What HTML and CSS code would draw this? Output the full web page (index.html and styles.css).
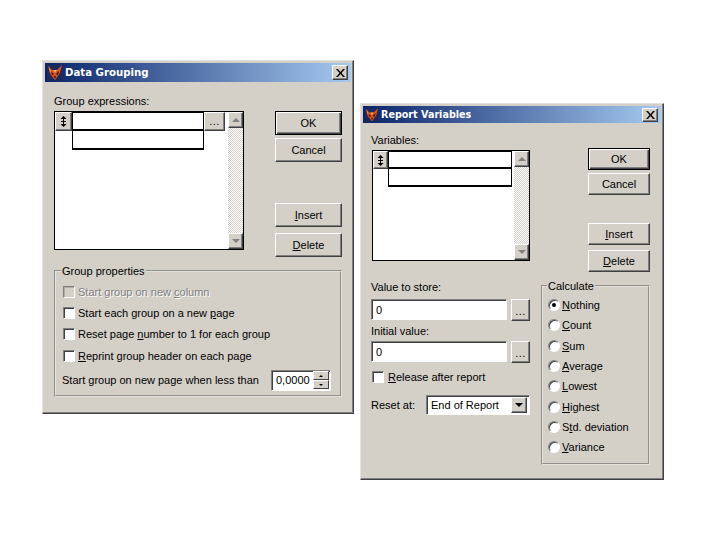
FILE: index.html
```html
<!DOCTYPE html>
<html lang="en">
<head>
    <meta charset="UTF-8">
    <title>Data Grouping and Report Variables</title>
    <link rel="stylesheet" href="styles.css">
</head>
<body>
    <!-- Data Grouping window -->
    <div class="dialog dialog-grouping">
        <div class="title-bar">
            <svg class="app-icon" viewBox="0 0 16 16">
                <rect width="16" height="16" fill="#1b2a5c"/>
                <path d="M1 1L5 5H10L15 0L13 8L8 15L3 9Z" fill="#d8501c"/>
                <path d="M4 7L7 9L5 10ZM12 6L9 9L11 10ZM7 11H9L8 14Z" fill="#300c08"/>
                <path d="M6 5H10L8 8ZM2 2L4 6L3 7Z" fill="#f0b040"/>
            </svg>
            <span class="title-text">Data Grouping</span>
            <span class="close-button"><svg viewBox="0 0 9 8"><path d="M0 0H2L4.500 3L7 0H9L5.500 4L9 8H7L4.500 5L2 8H0L3.500 4Z"/></svg></span>
        </div>
        <div class="dialog-body">
            <div class="top-row">
                <div class="list-column">
                    <div class="label">Group expressions:</div>
                    <div class="list-box">
                        <div class="list-rows">
                            <div class="list-row">
                                <span class="button header-button"><svg viewBox="0 0 7 11"><path d="M3.500 0L6.500 3H4V8H6.500L3.500 11L0.500 8H3V3H0.500ZM1 5H6V6H1Z"/></svg></span>
                                <span class="cell cell-active"></span>
                                <span class="button dots-button">...</span>
                            </div>
                            <div class="list-row">
                                <span class="header-space"></span>
                                <span class="cell"></span>
                            </div>
                        </div>
                        <div class="scrollbar">
                            <span class="button scroll-button"><i class="arrow-up"></i></span>
                            <span class="scroll-track"></span>
                            <span class="button scroll-button"><i class="arrow-down"></i></span>
                        </div>
                    </div>
                </div>
                <div class="button-column">
                    <div class="button default-button">OK</div>
                    <div class="button">Cancel</div>
                    <div class="button insert-button"><u>I</u>nsert</div>
                    <div class="button delete-button"><u>D</u>elete</div>
                </div>
            </div>
            <fieldset class="group-box properties-box">
                <legend>Group properties</legend>
                <div class="check-row disabled"><span class="check"></span><span>Start group on new <u>c</u>olumn</span></div>
                <div class="check-row"><span class="check"></span><span>Start each group on a new <u>p</u>age</span></div>
                <div class="check-row"><span class="check"></span><span>Reset page <u>n</u>umber to 1 for each group</span></div>
                <div class="check-row"><span class="check"></span><span><u>R</u>eprint group header on each page</span></div>
                <div class="spin-row">
                    <span>Start group on new page when less than</span>
                    <div class="spin-field">
                        <span>0,0000</span>
                        <div class="spin-buttons">
                            <span class="button spin-button"><i class="arrow-up tiny"></i></span>
                            <span class="button spin-button"><i class="arrow-down tiny"></i></span>
                        </div>
                    </div>
                </div>
            </fieldset>
        </div>
    </div>

    <!-- Report Variables window -->
    <div class="dialog dialog-variables">
        <div class="title-bar">
            <svg class="app-icon" viewBox="0 0 16 16">
                <rect width="16" height="16" fill="#1b2a5c"/>
                <path d="M1 1L5 5H10L15 0L13 8L8 15L3 9Z" fill="#d8501c"/>
                <path d="M4 7L7 9L5 10ZM12 6L9 9L11 10ZM7 11H9L8 14Z" fill="#300c08"/>
                <path d="M6 5H10L8 8ZM2 2L4 6L3 7Z" fill="#f0b040"/>
            </svg>
            <span class="title-text">Report Variables</span>
            <span class="close-button"><svg viewBox="0 0 9 8"><path d="M0 0H2L4.500 3L7 0H9L5.500 4L9 8H7L4.500 5L2 8H0L3.500 4Z"/></svg></span>
        </div>
        <div class="dialog-body">
            <div class="top-row">
                <div class="list-column">
                    <div class="label">Variables:</div>
                    <div class="list-box">
                        <div class="list-rows">
                            <div class="list-row">
                                <span class="button header-button"><svg viewBox="0 0 7 11"><path d="M3.500 0L6.500 3H4V8H6.500L3.500 11L0.500 8H3V3H0.500ZM1 5H6V6H1Z"/></svg></span>
                                <span class="cell cell-active"></span>
                            </div>
                            <div class="list-row">
                                <span class="header-space"></span>
                                <span class="cell"></span>
                            </div>
                        </div>
                        <div class="scrollbar">
                            <span class="button scroll-button"><i class="arrow-up"></i></span>
                            <span class="scroll-track"></span>
                            <span class="button scroll-button"><i class="arrow-down"></i></span>
                        </div>
                    </div>
                </div>
                <div class="button-column">
                    <div class="button default-button">OK</div>
                    <div class="button">Cancel</div>
                    <div class="button insert-button"><u>I</u>nsert</div>
                    <div class="button delete-button"><u>D</u>elete</div>
                </div>
            </div>
            <div class="lower-row">
                <div class="value-column">
                    <div class="label">Value to store:</div>
                    <div class="edit-row">
                        <span class="edit">0</span>
                        <span class="button dots-button">...</span>
                    </div>
                    <div class="label initial-label">Initial value:</div>
                    <div class="edit-row">
                        <span class="edit">0</span>
                        <span class="button dots-button">...</span>
                    </div>
                    <div class="check-row release-row"><span class="check"></span><span><u>R</u>elease after report</span></div>
                    <div class="reset-row">
                        <span>Reset at:</span>
                        <div class="combo">
                            <span>End of Report</span>
                            <span class="button combo-button"><i class="arrow-down dark"></i></span>
                        </div>
                    </div>
                </div>
                <fieldset class="group-box calculate-box">
                    <legend>Calculate</legend>
                    <div class="radio-row"><span class="radio selected"></span><span><u>N</u>othing</span></div>
                    <div class="radio-row"><span class="radio"></span><span><u>C</u>ount</span></div>
                    <div class="radio-row"><span class="radio"></span><span><u>S</u>um</span></div>
                    <div class="radio-row"><span class="radio"></span><span><u>A</u>verage</span></div>
                    <div class="radio-row"><span class="radio"></span><span><u>L</u>owest</span></div>
                    <div class="radio-row"><span class="radio"></span><span><u>H</u>ighest</span></div>
                    <div class="radio-row"><span class="radio"></span><span>S<u>t</u>d. deviation</span></div>
                    <div class="radio-row"><span class="radio"></span><span><u>V</u>ariance</span></div>
                </fieldset>
            </div>
        </div>
    </div>
</body>
</html>
```

FILE: styles.css
```css
body {
    margin: 0;
    background-color: #fff;
    color: #000;
    font-family: "Liberation Sans", Arial, sans-serif;
    font-size: 11px;
    line-height: 14px;
}

/* windows sit on a free canvas */
.dialog {
    position: absolute;
    box-sizing: border-box;
    padding: 2px;
    background-color: #d4d0c8;
    border: 1px solid;
    border-color: #e4e2dc #404040 #404040 #e4e2dc;
    box-shadow: inset -1px -1px 0 #808080;
}

.dialog-grouping {
    left: 42px;
    top: 60px;
    width: 312px;
    height: 354px;
}

.dialog-variables {
    left: 360px;
    top: 103px;
    width: 304px;
    height: 377px;
}

.title-bar {
    display: flex;
    align-items: center;
    height: 19px;
    padding: 0 3px 0 2px;
    background: linear-gradient(to right, #0a246a, #a6caf0);
}

.dialog-variables .title-bar {
    height: 17px;
}

.app-icon {
    width: 16px;
    height: 16px;
    flex: none;
}

.dialog-variables .app-icon {
    width: 14px;
    height: 14px;
}

.title-text {
    margin-left: 2px;
    flex: 1;
    color: #fff;
    font-family: "DejaVu Sans", sans-serif;
    font-weight: bold;
    font-size: 10.2px;
    white-space: nowrap;
}

.dialog-variables .title-text {
    font-size: 9.6px;
}

.close-button {
    box-sizing: border-box;
    display: flex;
    align-items: center;
    justify-content: center;
    width: 16px;
    height: 15px;
    background-color: #d4d0c8;
    border: 1px solid;
    border-color: #fff #404040 #404040 #fff;
    box-shadow: inset -1px -1px 0 #808080;
}

.close-button svg {
    width: 9px;
    height: 8px;
}

.dialog-variables .close-button {
    height: 14px;
}

.dialog-grouping .dialog-body {
    padding: 12px 0 0 9px;
}

.dialog-variables .dialog-body {
    padding: 10px 0 0 8px;
}

.top-row {
    display: flex;
}

.label {
    height: 14px;
    white-space: nowrap;
}

.button {
    box-sizing: border-box;
    display: flex;
    align-items: center;
    justify-content: center;
    flex: none;
    background-color: #d4d0c8;
    border: 1px solid;
    border-color: #fff #404040 #404040 #fff;
    box-shadow: inset -1px -1px 0 #808080;
}

.default-button {
    border-color: #000;
    box-shadow: inset 1px 1px 0 #fff, inset -1px -1px 0 #404040, inset -2px -2px 0 #808080;
}

.button-column {
    display: flex;
    flex-direction: column;
}

.dialog-grouping .button-column {
    width: 67px;
    margin: 17px 0 0 31px;
    gap: 3px;
}

.dialog-grouping .button-column .button {
    height: 24px;
}

.dialog-grouping .insert-button {
    margin-top: 38px;
}

.dialog-grouping .delete-button {
    margin-top: 3px;
}

.dialog-variables .button-column {
    width: 62px;
    margin: 15px 0 0 58px;
    gap: 3px;
}

.dialog-variables .button-column .button {
    height: 22px;
}

.dialog-variables .insert-button {
    margin-top: 25px;
}

.dialog-variables .delete-button {
    margin-top: 2px;
}

.list-box {
    box-sizing: border-box;
    display: flex;
    justify-content: space-between;
    margin-top: 3px;
    background-color: #fff;
    border: 1px solid #000;
}

.dialog-grouping .list-box {
    width: 190px;
    height: 139px;
}

.dialog-variables .list-box {
    width: 158px;
    height: 111px;
    margin-left: 1px;
}

.list-row {
    display: flex;
}

.header-button svg {
    width: 7px;
    height: 11px;
}

.dialog-grouping .header-button,
.dialog-grouping .header-space {
    width: 17px;
    height: 19px;
}

.dialog-variables .header-button,
.dialog-variables .header-space {
    width: 15px;
    height: 18px;
}

.cell {
    box-sizing: border-box;
    display: block;
    border: 1px solid #000;
    border-top: none;
    border-width: 0 1px 2px 1px;
}

.cell-active {
    border-top: 1px solid #000;
    border-width: 1px 1px 2px 1px;
}

.dialog-grouping .cell {
    width: 132px;
    height: 19px;
}

.dialog-variables .cell {
    width: 124px;
    height: 18px;
}

.dots-button {
    width: 21px;
    padding-bottom: 2px;
    align-items: flex-end;
    letter-spacing: 0.5px;
}

.dialog-grouping .list-row .dots-button {
    height: 19px;
}

.scrollbar {
    display: flex;
    flex-direction: column;
    width: 15px;
}

.scroll-button {
    height: 16px;
}

.scroll-track {
    flex: 1;
    background: repeating-conic-gradient(#fff 0 25%, #d4d0c8 0 50%) 0 0 / 2px 2px;
}

.arrow-up,
.arrow-down {
    display: block;
    width: 0;
    height: 0;
    border-left: 4px solid transparent;
    border-right: 4px solid transparent;
}

.arrow-up {
    border-bottom: 4px solid #808080;
}

.arrow-down {
    border-top: 4px solid #808080;
}

.arrow-up.tiny,
.arrow-down.tiny {
    border-left-width: 2px;
    border-right-width: 2px;
    border-top-color: #000;
    border-bottom-color: #000;
}

.arrow-up.tiny {
    border-bottom-width: 2px;
}

.arrow-down.tiny {
    border-top-width: 2px;
}

.arrow-down.dark {
    border-top-color: #000;
}

.group-box {
    box-sizing: border-box;
    min-width: 0;
    margin: 0;
    border: 2px groove #e4e2dc;
}

.group-box legend {
    padding: 0 1px;
    white-space: nowrap;
}

.properties-box {
    width: 288px;
    height: 133px;
    margin-top: 7px;
    padding: 3px 9px 0 6px;
}

.properties-box legend {
    margin-left: -1px;
}

.check-row {
    display: flex;
    align-items: center;
    gap: 3px;
    height: 21.4px;
    margin-left: 1px;
    white-space: nowrap;
}

.check-row.disabled {
    color: #808080;
    text-shadow: 1px 1px 0 #fff;
}

.check {
    box-sizing: border-box;
    flex: none;
    width: 12px;
    height: 12px;
    background-color: #fff;
    border: 1px solid;
    border-color: #808080 #fff #fff #808080;
    box-shadow: inset 1px 1px 0 #404040;
}

.disabled .check {
    background-color: #d4d0c8;
    box-shadow: inset 1px 1px 0 #b0aca4;
}

.spin-row {
    display: flex;
    align-items: center;
    justify-content: space-between;
    margin-top: 3px;
    white-space: nowrap;
}

.edit,
.spin-field,
.combo {
    box-sizing: border-box;
    background-color: #fff;
    border: 1px solid;
    border-color: #808080 #fff #fff #808080;
    box-shadow: inset 1px 1px 0 #404040;
}

.spin-field {
    display: flex;
    align-items: center;
    justify-content: space-between;
    width: 60px;
    height: 21px;
    padding: 0 1px 0 4px;
}

.spin-buttons {
    display: flex;
    flex-direction: column;
}

.spin-button {
    width: 16px;
    height: 9px;
    box-shadow: none;
}

.lower-row {
    display: flex;
    margin-top: 7px;
}

.value-column {
    width: 159px;
    padding-top: 1px;
}

.edit-row {
    display: flex;
    align-items: flex-start;
    gap: 4px;
    margin-top: 5px;
}

.edit {
    display: flex;
    align-items: center;
    width: 136px;
    height: 21px;
    padding-left: 4px;
}

.edit-row .dots-button {
    width: 19px;
    height: 22px;
}

.initial-label {
    margin-top: 3px;
}

.initial-label + .edit-row {
    margin-top: 3px;
}

.release-row {
    margin-top: 3px;
    height: 21px;
    gap: 4px;
}

.reset-row {
    display: flex;
    align-items: center;
    justify-content: space-between;
    margin-top: 8px;
}

.combo {
    display: flex;
    align-items: center;
    justify-content: space-between;
    width: 104px;
    height: 20px;
    padding: 0 2px 0 4px;
}

.combo-button {
    width: 16px;
    height: 16px;
}

.calculate-box {
    width: 109px;
    height: 186px;
    margin-left: 11px;
    padding: 2px 0 0 5px;
}

.calculate-box legend {
    margin-left: -1px;
}

.radio-row {
    display: flex;
    align-items: center;
    gap: 2px;
    height: 20.3px;
    white-space: nowrap;
}

.radio {
    box-sizing: border-box;
    display: flex;
    align-items: center;
    justify-content: center;
    flex: none;
    width: 12px;
    height: 12px;
    background-color: #fff;
    border: 1px solid;
    border-color: #808080 #fff #fff #808080;
    border-radius: 50%;
    box-shadow: inset 1px 1px 0 #404040;
}

.radio.selected::after {
    content: "";
    width: 4px;
    height: 4px;
    background-color: #000;
    border-radius: 50%;
}
```
